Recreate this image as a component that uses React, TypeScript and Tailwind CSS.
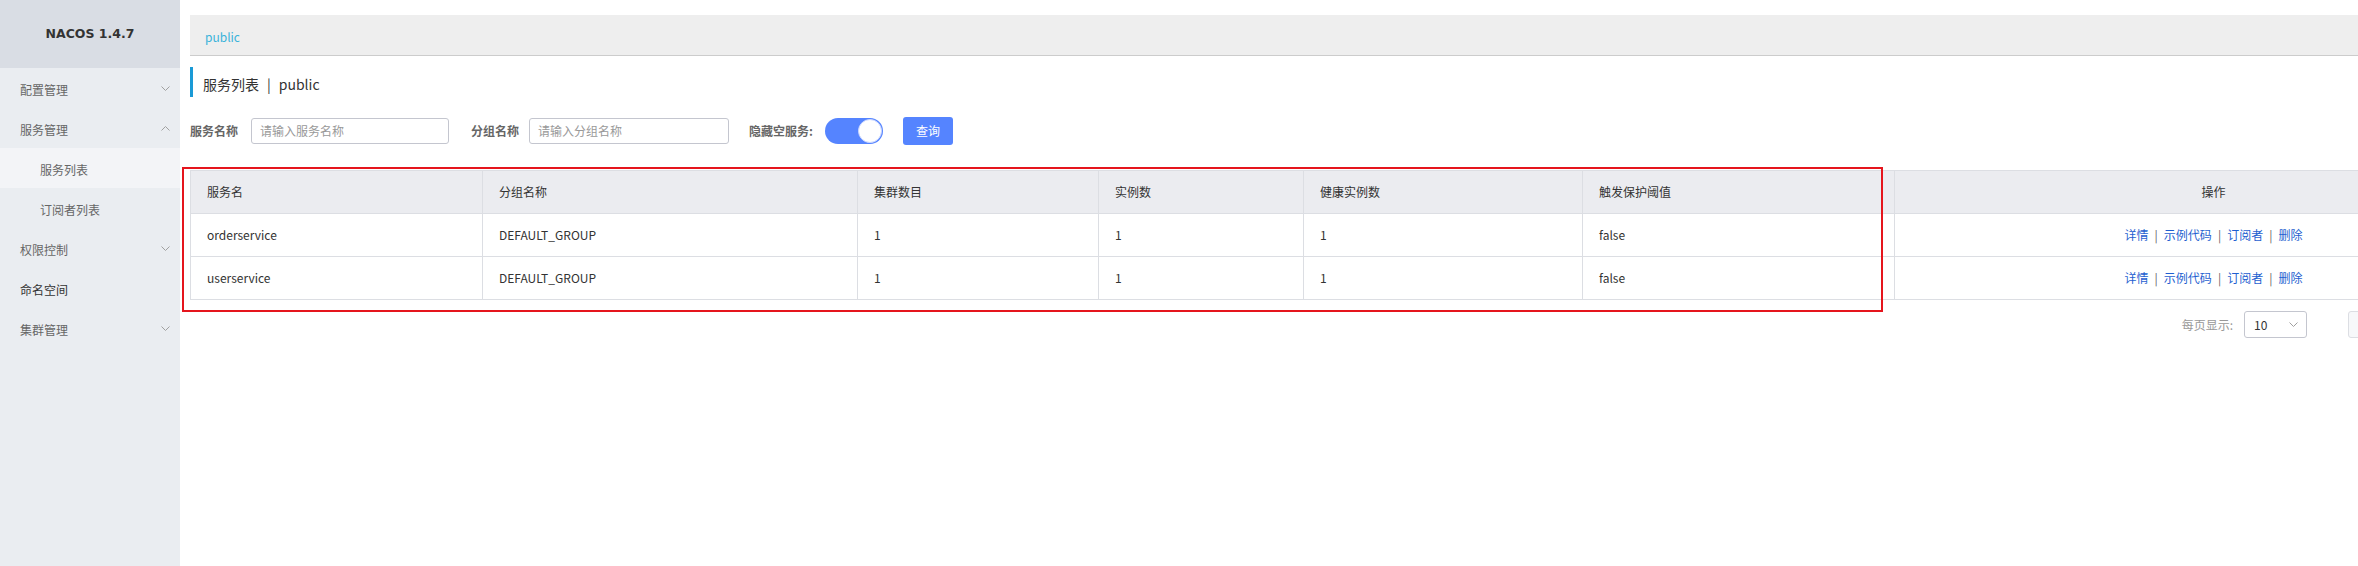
import React from "react";

const menu = [
  { label: "配置管理", chevron: "down" },
  { label: "服务管理", chevron: "up" },
  { label: "服务列表", sub: true, active: true },
  { label: "订阅者列表", sub: true },
  { label: "权限控制", chevron: "down" },
  { label: "命名空间", dark: true },
  { label: "集群管理", chevron: "down" },
];

const rows = [
  { name: "orderservice", group: "DEFAULT_GROUP", cluster: "1", ins: "1", healthy: "1", protect: "false" },
  { name: "userservice", group: "DEFAULT_GROUP", cluster: "1", ins: "1", healthy: "1", protect: "false" },
];

function Chevron({ up }: { up?: boolean }) {
  return (
    <svg width="9" height="5" viewBox="0 0 9 5" className={up ? "rotate-180" : ""}>
      <path d="M0.5 0.5 L4.5 4.5 L8.5 0.5" stroke="#a0a0a0" strokeWidth="1" fill="none" />
    </svg>
  );
}

function Sidebar() {
  return (
    <div className="w-[180px] shrink-0 h-full bg-[#eaedf1] flex flex-col">
      <div className="h-[68px] bg-[#d9dde4] flex items-center justify-center">
        <span className="font-['DejaVu_Sans',sans-serif] font-bold text-[12.5px] text-[#333]">NACOS 1.4.7</span>
      </div>
      {menu.map((m) => (
        <div
          key={m.label}
          className={
            "h-[40px] flex items-center justify-between pr-[10px] text-[12px] " +
            (m.sub ? "pl-[40px] " : "pl-[20px] ") +
            (m.active ? "bg-[#f3f4f7] " : "") +
            (m.dark ? "text-[#333]" : "text-[#666]")
          }
        >
          <span className="pt-[3px]">{m.label}</span>
          {m.chevron && <Chevron up={m.chevron === "up"} />}
        </div>
      ))}
    </div>
  );
}

function Filters() {
  return (
    <div className="mt-[20px] flex items-center h-[28px] text-[12px]">
      <span className="font-bold text-[#666]">服务名称</span>
      <div className="ml-[13px] w-[198px] h-[26px] border border-[#c4c6cf] rounded-[3px] flex items-center pl-[8px] text-[#999]">
        请输入服务名称
      </div>
      <span className="ml-[22px] font-bold text-[#666]">分组名称</span>
      <div className="ml-[10px] w-[200px] h-[26px] border border-[#c4c6cf] rounded-[3px] flex items-center pl-[8px] text-[#999]">
        请输入分组名称
      </div>
      <span className="ml-[20px] font-bold text-[#666]">隐藏空服务:</span>
      <div className="ml-[12px] w-[58px] h-[26px] rounded-full bg-[#5584ff] flex items-center justify-end pr-[1px]">
        <div className="w-[24px] h-[24px] rounded-full bg-white border border-[#c9d6ff]" />
      </div>
      <div className="ml-[20px] w-[50px] h-[28px] rounded-[3px] bg-[#5584ff] text-white flex items-center justify-center">
        查询
      </div>
    </div>
  );
}

function Ops() {
  const items = ["详情", "示例代码", "订阅者", "删除"];
  return (
    <div className="flex items-center justify-center text-[#1f5fd0]">
      {items.map((t, i) => (
        <React.Fragment key={t}>
          {i > 0 && <span className="mx-[6px] text-[#666]">|</span>}
          <span>{t}</span>
        </React.Fragment>
      ))}
    </div>
  );
}

export default function App() {
  const th = "h-[43px] border border-[#dcdee3] px-[16px] text-left font-normal";
  const td = "h-[43px] border border-[#dcdee3] px-[16px]";
  return (
    <div className="relative flex w-[2358px] h-[566px] overflow-hidden bg-white font-['Noto_Sans_CJK_SC',sans-serif] text-[#333]">
      <Sidebar />
      <div className="flex-1 min-w-0 pl-[10px] pt-[15px]">
        <div className="h-[41px] bg-[#eeeeee] border-b border-[#cccccc] flex items-center pl-[15px] pt-[4px] text-[12px] text-[#3ab3da]">
          public
        </div>
        <div className="mt-[11px] h-[30px] border-l-[3px] border-[#1a9ad6] pl-[10px] pt-[4px] flex items-center text-[14px] text-[#333]">
          <span>服务列表</span>
          <span className="mx-[8px]">|</span>
          <span>public</span>
        </div>
        <Filters />
        <table className="mt-[25px] w-[2342px] table-fixed border-collapse text-[12px] text-[#333]">
          <colgroup>
            <col className="w-[292px]" />
            <col className="w-[375px]" />
            <col className="w-[241px]" />
            <col className="w-[205px]" />
            <col className="w-[279px]" />
            <col className="w-[312px]" />
            <col className="w-[638px]" />
          </colgroup>
          <thead>
            <tr className="bg-[#ebecf0]">
              <th className={th}>服务名</th>
              <th className={th}>分组名称</th>
              <th className={th}>集群数目</th>
              <th className={th}>实例数</th>
              <th className={th}>健康实例数</th>
              <th className={th}>触发保护阈值</th>
              <th className={th + " !text-center"}>操作</th>
            </tr>
          </thead>
          <tbody>
            {rows.map((r) => (
              <tr key={r.name}>
                <td className={td}>{r.name}</td>
                <td className={td}>{r.group}</td>
                <td className={td}>{r.cluster}</td>
                <td className={td}>{r.ins}</td>
                <td className={td}>{r.healthy}</td>
                <td className={td}>{r.protect}</td>
                <td className={td}>
                  <Ops />
                </td>
              </tr>
            ))}
          </tbody>
        </table>
        <div className="mt-[11px] w-[2342px] flex justify-end items-center text-[12px]">
          <span className="text-[#999]">每页显示:</span>
          <div className="ml-[11px] w-[63px] h-[27px] border border-[#c4c6cf] rounded-[3px] flex items-center justify-between pl-[9px] pr-[8px] text-[#333]">
            <span>10</span>
            <Chevron />
          </div>
          <div className="ml-[41px] w-[184px] h-[27px] flex gap-[4px]">
            <div className="w-[60px] h-[27px] border border-[#dcdee3] rounded-[3px] bg-[#f7f8fa]" />
          </div>
        </div>
      </div>
      <div className="absolute left-[182px] top-[167px] w-[1701px] h-[145px] border-2 border-[#e5151d] pointer-events-none" />
    </div>
  );
}
